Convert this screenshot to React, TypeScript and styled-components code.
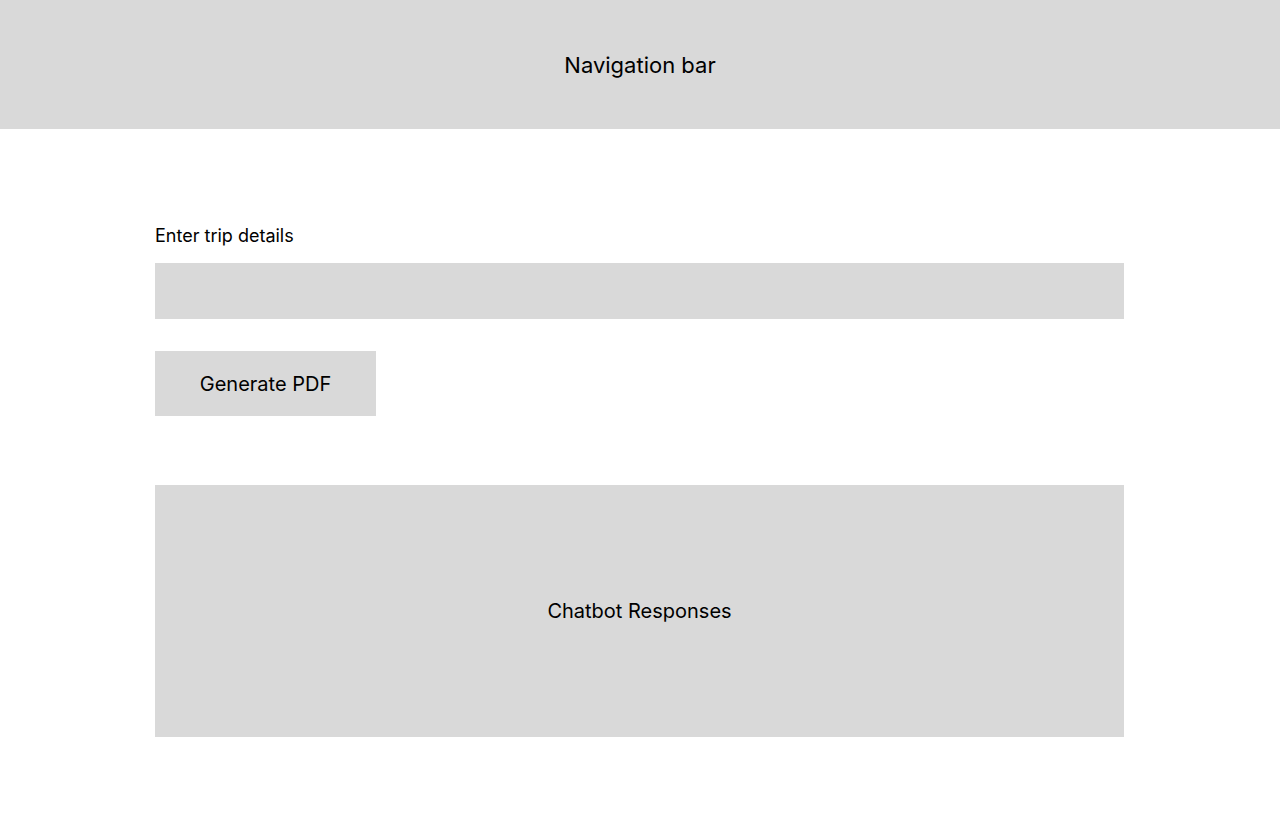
import React from 'react';
import styled, { createGlobalStyle } from 'styled-components';

const GlobalStyle = createGlobalStyle`
  html, body {
    margin: 0;
    padding: 0;
    background: #ffffff;
    font-family: Inter, "Noto Sans", sans-serif;
    color: #000000;
  }
`;

const Nav = styled.nav`
  height: 129px;
  background-color: #d9d9d9;
  display: flex;
  align-items: center;
  justify-content: center;
  font-size: 22px;
`;

const Main = styled.main`
  margin: 0 156px 0 155px;
  padding-top: 94px;
  display: flex;
  flex-direction: column;
`;

const Label = styled.label`
  font-size: 18px;
  line-height: 26px;
  margin-bottom: 14px;
`;

const Input = styled.input`
  height: 56px;
  border: none;
  background-color: #d9d9d9;
  padding: 0 16px;
  font-family: inherit;
  font-size: 18px;
  outline: none;
  box-sizing: border-box;
  width: 100%;
`;

const Button = styled.button`
  align-self: flex-start;
  margin-top: 32px;
  width: 221px;
  height: 65px;
  border: none;
  background-color: #d9d9d9;
  font-family: inherit;
  font-size: 20px;
  color: #000000;
  cursor: pointer;
`;

const Responses = styled.section`
  margin-top: 69px;
  height: 252px;
  background-color: #d9d9d9;
  display: flex;
  align-items: center;
  justify-content: center;
  font-size: 20px;
`;

export default function App() {
  return (
    <>
      <GlobalStyle />
      <Nav>Navigation bar</Nav>
      <Main>
        <Label htmlFor="trip">Enter trip details</Label>
        <Input id="trip" type="text" />
        <Button>Generate PDF</Button>
        <Responses>Chatbot Responses</Responses>
      </Main>
    </>
  );
}
